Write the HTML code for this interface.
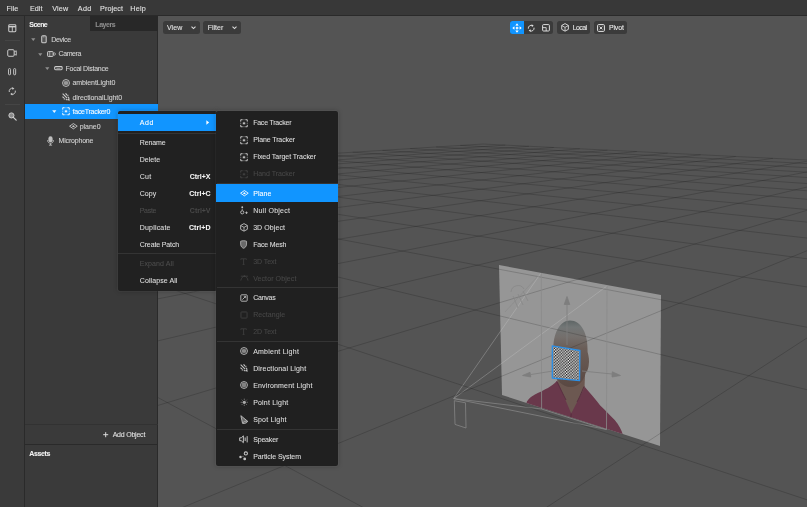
<!DOCTYPE html>
<html lang="en">
<head>
<meta charset="utf-8">
<title>Scene Editor</title>
<style>
*{margin:0;padding:0;box-sizing:border-box}
html,body{width:807px;height:507px;overflow:hidden;background:#545454}
body{position:relative;font-family:"Liberation Sans",sans-serif;font-size:7px;line-height:10px;color:#d0d0d0;-webkit-font-smoothing:antialiased}
.abs{position:absolute;display:block}
.t{white-space:nowrap;font-size:7px;line-height:10px;height:10px;-webkit-text-stroke:0.08px currentColor}
.b{-webkit-text-stroke:0.05px currentColor}
.b{font-weight:bold}
svg{display:block;overflow:visible}
#menubar{left:0;top:0;width:807px;height:16.3px;background:#383838;border-bottom:1.5px solid #2a2a2a}
#ltool{left:0;top:16px;width:25px;height:491px;background:#3a3a3a;border-right:1px solid #2a2a2a}
#scene{left:25px;top:16px;width:133px;height:428px;background:#3a3a3a}
#assets{left:25px;top:444px;width:133px;height:63px;background:#3a3a3a;border-top:1px solid #2a2a2a}
#vpborder{left:157px;top:16px;width:1px;height:491px;background:#2a2a2a}
#layers{left:90px;top:16px;width:68px;height:15px;background:#282828}
.selrow{background:#1195ff}
.sep{height:1px;background:#343434}
.menu{background:#212121;border-radius:2px;box-shadow:0 0 0 0.6px rgba(255,255,255,.07),0 0 5px rgba(0,0,0,.28)}
.hlrow{background:#1195ff}
.btn{background:#3b3b3b;border-radius:2.5px}
#vp{left:158px;top:16px;width:649px;height:491px;overflow:hidden}
</style>
</head>
<body>
<div id="app" style="position:absolute;left:0;top:0;width:807px;height:507px;overflow:hidden;transform:translateZ(0);will-change:transform">
<!-- viewport -->
<div id="vp" class="abs">
<svg width="649" height="491" viewBox="158 16 649 491">
  <defs>
    <pattern id="chk" patternUnits="userSpaceOnUse" width="2.8" height="2.8" patternTransform="matrix(1 0.17 -0.01 1.02 552.3 345.8)">
      <rect width="2.8" height="2.8" fill="#f6f6f6"/>
      <rect width="1.4" height="1.4" fill="#161616"/>
      <rect x="1.4" y="1.4" width="1.4" height="1.4" fill="#161616"/>
    </pattern>
    <linearGradient id="headg" x1="0" y1="0" x2="0" y2="1"><stop offset="0" stop-color="#5e6565"/><stop offset="0.1" stop-color="#727676"/><stop offset="0.25" stop-color="#746f6c"/><stop offset="0.42" stop-color="#6a5d57"/><stop offset="1" stop-color="#5a4842"/></linearGradient>
    <clipPath id="planeclip"><path d="M499 265L661 295L660 446L502 395Z"/></clipPath>
  </defs>
  <!-- device + frustum -->
  <g fill="none" stroke="#888" stroke-width="0.75">
    <path d="M454.3 400.7L465.5 402.8L466 428L455 424.4Z"/>
    <path d="M453.7 398.6L541 273M453.7 398.6L607 286M453.7 398.6L606.5 429.5M453.7 398.6L541.6 409"/>
  </g>
  <!-- image plane -->
  <path d="M499 265L661 295L660 446L502 395Z" fill="#c6c6c6" fill-opacity="0.58"/>
  <g clip-path="url(#planeclip)">
    <!-- person -->
    <path d="M526.9 401.4C531 396 536 394 539 392.6C545 389.5 551 387 556.7 381.3L584 386C590 393 596 400 600.2 405.4C606 411 611 416 614.7 420C619 425 621.5 430 622.8 434.4L623 442L526 405Z" fill="#69384b"/>
    <path d="M557 380L571.2 413.5L584.5 387.7L585 374L556 370Z" fill="#6c5851"/>
    <path d="M553.4 352C552.6 333 560 320.5 570 320.5C581 320.5 588.2 333 587.6 352C588.6 356 589.6 360 588.6 366C587.6 371 586.6 372 585.6 373C584 381 578 387 570.5 387C562 387 556 380 554.6 371C553.6 364 553.6 358 553.4 352Z" fill="url(#headg)"/>
    <path d="M571.2 413.5L570 432" stroke="#552b3b" stroke-width="0.9" fill="none"/>
    <path d="M556.7 381.3L562 392L566 400M584 386.5L580 396L577 402" stroke="#5a3041" stroke-width="1" fill="none"/>
  </g>
  <path id="grid" d="M483.0 144.0L1500.0 194.3M460.3 145.4L1500.0 199.9M436.1 147.0L1500.0 206.3M410.2 148.6L1500.0 213.5M382.5 150.4L1500.0 221.8M352.6 152.2L1500.0 231.4M320.4 154.3L1500.0 242.7M285.5 156.5L1500.0 256.1M247.7 158.9L1500.0 272.2M206.5 161.5L1500.0 292.1M161.4 164.3L1500.0 317.2M111.9 167.4L1500.0 349.9M57.4 170.9L1500.0 394.2M-3.1 174.7L1500.0 457.7M-70.5 178.9L1500.0 556.2M-146.1 183.7L1500.0 729.6M-231.5 189.1L1500.0 1116.0M-328.8 195.2L1500.0 2733.1M483.0 144.0L-700.0 218.7M505.3 145.1L-700.0 225.7M528.9 146.3L-700.0 233.7M553.7 147.5L-700.0 242.8M579.8 148.8L-700.0 253.1M607.5 150.2L-700.0 265.1M636.7 151.6L-700.0 279.2M667.7 153.1L-700.0 295.8M700.6 154.8L-700.0 315.9M735.6 156.5L-700.0 340.7M773.0 158.3L-700.0 371.8M812.8 160.3L-700.0 412.1M855.5 162.4L-700.0 466.6M901.3 164.7L-700.0 544.2M950.6 167.1L-700.0 663.4M1003.8 169.8L-700.0 870.3M1061.3 172.6L-700.0 1317.9M1123.8 175.7L-700.0 3008.2" fill="none" stroke="#000" stroke-opacity="0.17" stroke-width="1"/>
  <!-- frame lines on plane -->
  <g fill="none" stroke="#8a8a8a" stroke-width="0.8">
    <path d="M541.3 273L541.6 409L606.5 429.5L607 285.5"/>
  </g>
  <!-- light gizmo -->
  <g fill="none" stroke="#888" stroke-width="0.8">
    <path d="M511 292a7 7 0 0 1 13 -3M513 296l5 12M518 294l5 11M523 291l5 10"/>
    <path d="M505 312L538 276" stroke-opacity="0.7"/>
  </g>
  <!-- arrows -->
  <g fill="#7e7e7e" stroke="#7e7e7e" stroke-width="0.8">
    <path d="M567 303V345" fill="none"/>
    <path d="M567 296.5L569.8 304.5H564.2Z"/>
    <path d="M531 374.5L553 371" fill="none"/>
    <path d="M522.5 375.5L530 372.3L530.8 377Z"/>
    <path d="M582 371L612 374" fill="none"/>
    <path d="M620.5 375.5L612.3 371.8L612 377Z"/>
  </g>
  <!-- checker plane -->
  <path d="M552.3 345.8L579.9 350.5L579.6 380.6L552.3 378Z" fill="url(#chk)" stroke="#2c8fe6" stroke-width="1.3" stroke-linejoin="round"/>
</svg>
</div>

<!-- viewport buttons -->
<div class="abs btn" style="left:163px;top:21px;width:37px;height:13px"></div>
<span class="abs t" style="left:166.95px;top:23px;color:#e6e6e6;letter-spacing:0.118px;">View</span>
<svg class="abs" style="left:191.3px;top:26.2px" width="5" height="3.4" viewBox="0 0 6 4"><path d="M0.6 0.6L3 3L5.4 0.6" fill="none" stroke="#dcdcdc" stroke-width="1.3"/></svg>
<div class="abs btn" style="left:203.3px;top:21px;width:37.4px;height:13px"></div>
<span class="abs t" style="left:207.65px;top:23px;color:#e6e6e6;letter-spacing:0.027px;">Filter</span>
<svg class="abs" style="left:232px;top:26.2px" width="5" height="3.4" viewBox="0 0 6 4"><path d="M0.6 0.6L3 3L5.4 0.6" fill="none" stroke="#dcdcdc" stroke-width="1.3"/></svg>

<!-- transform toolbar -->
<div class="abs btn" style="left:509.5px;top:21.2px;width:43.5px;height:13px"></div>
<div class="abs" style="left:509.5px;top:21.2px;width:14.5px;height:13px;background:#1195ff;border-radius:2.5px 0 0 2.5px"></div>
<svg class="abs" style="left:511.7px;top:22.7px" width="10" height="10" viewBox="0 0 10 10"><path d="M5 0.3L6.7 2.4H3.3ZM5 9.7L3.3 7.6H6.7ZM0.3 5L2.4 3.3V6.7ZM9.7 5L7.6 6.7V3.3Z" fill="#fff"/><rect x="4.1" y="4.1" width="1.8" height="1.8" fill="#fff"/><path d="M5 2.4V7.6M2.4 5H7.6" stroke="#fff" stroke-width="0.7" stroke-dasharray="1 0.9"/></svg>
<svg class="abs" style="left:527.4px;top:23.5px" width="8.4" height="8.4" viewBox="0 0 10 10"><path d="M1.6 5.6A3.5 3.5 0 0 1 6.6 1.9M8.4 4.4A3.5 3.5 0 0 1 3.4 8.1" fill="none" stroke="#e6e6e6" stroke-width="1.1"/><path d="M5.6 0.4L8 2.2L5.8 3.6Z" fill="#e6e6e6"/><path d="M4.4 9.6L2 7.8L4.2 6.4Z" fill="#e6e6e6"/></svg>
<svg class="abs" style="left:542px;top:23.8px" width="8" height="7.6" viewBox="0 0 9 9" preserveAspectRatio="none"><rect x="0.7" y="0.7" width="7.6" height="7.6" rx="1" fill="none" stroke="#e6e6e6" stroke-width="1.1"/><path d="M0.7 4.3H4.7V8.3" fill="none" stroke="#e6e6e6" stroke-width="1"/></svg>
<div class="abs btn" style="left:556.8px;top:21.2px;width:33.5px;height:13px"></div>
<svg class="abs" style="left:560.5px;top:23.4px" width="8.1" height="8.8" viewBox="0 0 9 10"><path d="M4.5 0.7L8.3 2.8V7.2L4.5 9.3L0.7 7.2V2.8Z" fill="none" stroke="#e6e6e6" stroke-width="1" stroke-linejoin="round"/><path d="M0.8 2.9L4.5 5L8.2 2.9M4.5 5V9.2" fill="none" stroke="#e6e6e6" stroke-width="0.9"/></svg>
<span class="abs t" style="left:572.65px;top:23px;color:#ececec;letter-spacing:-0.584px;">Local</span>
<div class="abs btn" style="left:593.5px;top:21.2px;width:33.5px;height:13px"></div>
<svg class="abs" style="left:597.1px;top:23.8px" width="8" height="8" viewBox="0 0 8 8"><rect x="0.6" y="0.6" width="6.8" height="6.8" rx="1" fill="none" stroke="#e6e6e6" stroke-width="1"/><path d="M2.6 2.6L5.4 5.4M5.4 2.6L2.6 5.4" stroke="#e6e6e6" stroke-width="0.9"/></svg>
<span class="abs t" style="left:608.95px;top:23px;color:#ececec;letter-spacing:-0.166px;">Pivot</span>

<!-- menubar -->
<div id="menubar" class="abs"></div>
<span class="abs t" style="left:6.55px;top:4px;color:#e4e4e4;font-size:7.2px;letter-spacing:0.069px;">File</span><span class="abs t" style="left:29.95px;top:4px;color:#e4e4e4;font-size:7.2px;letter-spacing:0.070px;">Edit</span><span class="abs t" style="left:52.25px;top:4px;color:#e4e4e4;font-size:7.2px;letter-spacing:0.149px;">View</span><span class="abs t" style="left:77.65px;top:4px;color:#e4e4e4;font-size:7.2px;letter-spacing:0.452px;">Add</span><span class="abs t" style="left:100.05px;top:4px;color:#e4e4e4;font-size:7.2px;letter-spacing:0.104px;">Project</span><span class="abs t" style="left:130.35px;top:4px;color:#e4e4e4;font-size:7.2px;letter-spacing:0.234px;">Help</span>

<!-- left tool column -->
<div id="ltool" class="abs"></div>
<svg class="abs" style="left:7.6px;top:24.2px" width="8.6" height="8.4" viewBox="0 0 9 9"><rect x="0.7" y="0.7" width="7.6" height="7.6" rx="1" fill="none" stroke="#cecece" stroke-width="1.1"/><path d="M0.7 2.9H8.3" stroke="#cecece" stroke-width="1.5" fill="none"/><path d="M4.5 3.1V8.3" stroke="#cecece" stroke-width="1" fill="none"/></svg>
<div class="abs" style="left:5px;top:40.3px;width:14.5px;height:1px;background:#454545"></div>
<svg class="abs" style="left:7.1px;top:49.2px" width="10" height="8" viewBox="0 0 11 9"><rect x="0.7" y="0.8" width="7.2" height="7.4" rx="1.2" fill="none" stroke="#cecece" stroke-width="1.1"/><path d="M7.9 3.4L10.3 2V7L7.9 5.6" fill="none" stroke="#cecece" stroke-width="1" stroke-linejoin="round"/></svg>
<svg class="abs" style="left:7.9px;top:68.4px" width="8.2" height="7.4" viewBox="0 0 9 8"><rect x="0.6" y="0.6" width="2.2" height="6.8" rx="0.9" fill="none" stroke="#cecece" stroke-width="1"/><rect x="6.2" y="0.6" width="2.2" height="6.8" rx="0.9" fill="none" stroke="#cecece" stroke-width="1"/></svg>
<svg class="abs" style="left:7.8px;top:87.2px" width="8.6" height="8.6" viewBox="0 0 10 10"><path d="M1.5 5.8A3.6 3.6 0 0 1 5.9 1.5M8.5 4.2A3.6 3.6 0 0 1 4.1 8.5" fill="none" stroke="#cecece" stroke-width="1.1"/><path d="M5 0.1L7.4 1.9L5.1 3.3Z" fill="#cecece"/><path d="M5 9.9L2.6 8.1L4.9 6.7Z" fill="#cecece"/></svg>
<div class="abs" style="left:5px;top:104px;width:14.5px;height:1px;background:#454545"></div>
<svg class="abs" style="left:7.6px;top:111.6px" width="8.8" height="8.8" viewBox="0 0 10 10"><circle cx="3.9" cy="3.9" r="2.9" fill="#8a8a8a" stroke="#cecece" stroke-width="1.1"/><path d="M6.1 6.1L9.3 9.3" stroke="#cecece" stroke-width="1.4" stroke-linecap="round"/></svg>

<!-- scene panel -->
<div id="scene" class="abs"></div>
<div id="assets" class="abs"></div>
<div id="vpborder" class="abs"></div>
<div id="layers" class="abs"></div>
<span class="abs t b" style="left:29.35px;top:20px;color:#f4f4f4;letter-spacing:-0.556px;">Scene</span>
<span class="abs t b" style="left:95.35px;top:20px;color:#8e8e8e;letter-spacing:-0.476px;">Layers</span>
<span class="abs" style="left:31.1px;top:38.1px;color:#8f8f8f"><svg class="ar" width="4.6" height="3" viewBox="0 0 6 4"><path d="M0.2 0.3H5.8L3 3.9Z" fill="currentColor"/></svg></span><span class="abs " style="left:41.04px;top:35.16px;color:#cdcdcd;"><svg class="ic" width="5.92" height="8.48" viewBox="0 0 7.4 10.6" ><rect x="0.9" y="0.9" width="5.6" height="8.8" rx="1.4" fill="#888" fill-opacity="0.35" stroke="currentColor" stroke-width="1.3"/><path d="M2.6 2.4H4.4" stroke="currentColor" stroke-width="0.8"/></svg></span><span class="abs t" style="left:51.15px;top:35px;color:#d4d4d4;letter-spacing:-0.281px;">Device</span><span class="abs" style="left:38.1px;top:52.5px;color:#8f8f8f"><svg class="ar" width="4.6" height="3" viewBox="0 0 6 4"><path d="M0.2 0.3H5.8L3 3.9Z" fill="currentColor"/></svg></span><span class="abs " style="left:47.20px;top:50.84px;color:#cdcdcd;"><svg class="ic" width="8.80" height="6.00" viewBox="0 0 11 7.5" ><rect x="0.7" y="0.7" width="7" height="6.1" rx="0.9" fill="#777" fill-opacity="0.35" stroke="currentColor" stroke-width="1.2"/><path d="M3.4 1V6.5" stroke="currentColor" stroke-width="0.8"/><rect x="8.3" y="2.3" width="2.1" height="2.9" rx="0.8" fill="none" stroke="currentColor" stroke-width="0.9"/></svg></span><span class="abs t" style="left:58.55px;top:49px;color:#d4d4d4;letter-spacing:-0.421px;">Camera</span><span class="abs" style="left:45.3px;top:67.0px;color:#8f8f8f"><svg class="ar" width="4.6" height="3" viewBox="0 0 6 4"><path d="M0.2 0.3H5.8L3 3.9Z" fill="currentColor"/></svg></span><span class="abs " style="left:54.30px;top:66.04px;color:#cdcdcd;"><svg class="ic" width="8.80" height="4.48" viewBox="0 0 11 5.6" ><rect x="0.8" y="0.8" width="9.4" height="3.8" rx="1.2" fill="none" stroke="currentColor" stroke-width="1.3"/><path d="M3 3.2h5" stroke="currentColor" stroke-width="0.7"/></svg></span><span class="abs t" style="left:65.45px;top:64px;color:#d4d4d4;letter-spacing:-0.238px;">Focal Distance</span><span class="abs " style="left:62.00px;top:78.72px;color:#cdcdcd;"><svg class="ic" width="8.00" height="8.00" viewBox="0 0 10 10" ><circle cx="5" cy="5" r="4.3" fill="none" stroke="currentColor" stroke-width="1.1"/><circle cx="5" cy="5" r="2.9" fill="currentColor" fill-opacity="0.5"/><path d="M2.2 5H7.8" stroke="currentColor" stroke-width="0.7" stroke-opacity="0.8"/><path d="M2.6 3.6H7.4M2.6 6.4H7.4" stroke="currentColor" stroke-width="0.5" stroke-opacity="0.5"/></svg></span><span class="abs t" style="left:72.55px;top:78px;color:#d4d4d4;letter-spacing:-0.099px;">ambientLight0</span><span class="abs " style="left:62.10px;top:93.16px;color:#cdcdcd;"><svg class="ic" width="8.00" height="8.00" viewBox="0 0 10 10" ><path d="M0.8 0.8L6.4 6.4M4.4 0.6L6.3 2.5M0.6 4.4L2.5 6.3M7.6 5.2L9 6.6M5.2 7.6L6.6 9" stroke="currentColor" stroke-width="1.35" fill="none"/><path d="M9.7 9.7L6.3 8.9L8.9 6.3Z" fill="currentColor"/><path d="M8.3 4.3L5.9 3.7L7.7 1.9Z" fill="currentColor" fill-opacity="0.9"/><path d="M4.3 8.3L1.9 7.7L3.7 5.9Z" fill="currentColor" fill-opacity="0.9"/></svg></span><span class="abs t" style="left:72.55px;top:93px;color:#d4d4d4;letter-spacing:-0.093px;">directionalLight0</span><div class="abs selrow" style="left:25px;top:104px;width:133px;height:15px"></div><span class="abs" style="left:52.0px;top:110.3px;color:#e8f4ff"><svg class="ar" width="4.6" height="3" viewBox="0 0 6 4"><path d="M0.2 0.3H5.8L3 3.9Z" fill="currentColor"/></svg></span><span class="abs " style="left:62.00px;top:107.36px;color:#eaf5ff;"><svg class="ic" width="8.00" height="8.48" viewBox="0 0 10 10.6" ><path d="M0.9 3.3V0.9H3.3M6.7 0.9H9.1V3.3M9.1 7.3V9.7H6.7M3.3 9.7H0.9V7.3" fill="none" stroke="currentColor" stroke-width="1.25"/><path d="M4.3 0.9H5.7M4.3 9.7H5.7M0.9 4.6V6M9.1 4.6V6" stroke="currentColor" stroke-width="1.1" stroke-opacity="0.75"/><circle cx="5" cy="5.3" r="1.3" fill="currentColor"/><circle cx="5" cy="5.3" r="2.3" fill="currentColor" fill-opacity="0.25"/></svg></span><span class="abs t" style="left:72.55px;top:107px;color:#ffffff;letter-spacing:-0.254px;">faceTracker0</span><span class="abs " style="left:68.50px;top:123.20px;color:#cdcdcd;"><svg class="ic" width="8.80" height="6.40" viewBox="0 0 11 8" ><path d="M5.5 0.7L10.3 4L5.5 7.3L0.7 4Z" fill="none" stroke="currentColor" stroke-width="1.1" stroke-linejoin="round"/><path d="M5.5 2.7L7.4 4L5.5 5.3L3.6 4Z" fill="currentColor"/></svg></span><span class="abs t" style="left:79.75px;top:122px;color:#d4d4d4;letter-spacing:-0.046px;">plane0</span><span class="abs " style="left:47.48px;top:135.64px;color:#cdcdcd;"><svg class="ic" width="7.04" height="9.68" viewBox="0 0 8 11" ><rect x="1.6" y="0.3" width="4.8" height="6.8" rx="2.4" fill="currentColor" fill-opacity="0.9"/><path d="M0.6 4.8C0.6 9.3 7.4 9.3 7.4 4.8M4 8.4V10.3M2.2 10.4H5.8" fill="none" stroke="currentColor" stroke-width="0.9"/></svg></span><span class="abs t" style="left:58.55px;top:136px;color:#d4d4d4;letter-spacing:-0.186px;">Microphone</span>
<div class="abs" style="left:25px;top:424px;width:133px;height:1px;background:#323232"></div>
<svg class="abs" style="left:103.1px;top:431.9px" width="5.4" height="5.4" viewBox="0 0 6 6"><path d="M3 0.2V5.8M0.2 3H5.8" stroke="#dedede" stroke-width="1.1"/></svg>
<span class="abs t" style="left:112.65px;top:430px;color:#e0e0e0;letter-spacing:-0.216px;">Add Object</span>
<span class="abs t b" style="left:29.35px;top:449px;color:#f4f4f4;letter-spacing:-0.394px;">Assets</span>

<!-- context menu 1 -->
<div class="abs menu" style="left:117.5px;top:111px;width:99px;height:180px"></div>
<div class="abs hlrow" style="left:117.5px;top:113.8px;width:99px;height:17.4px"></div>
<svg class="abs" style="left:205.8px;top:120.4px" width="3.4" height="5" viewBox="0 0 4 6"><path d="M0.4 0.4L3.7 3L0.4 5.6Z" fill="#fff"/></svg>
<div class="abs sep" style="left:117.5px;top:132.6px;width:99px"></div>
<div class="abs sep" style="left:117.5px;top:253px;width:99px"></div>
<span class="abs t" style="left:139.75px;top:118px;color:#fff;letter-spacing:0.566px;">Add</span><span class="abs t" style="left:139.75px;top:138px;color:#dedede;letter-spacing:-0.114px;">Rename</span><span class="abs t" style="left:139.75px;top:155px;color:#dedede;letter-spacing:0.013px;">Delete</span><span class="abs t" style="left:139.75px;top:172px;color:#dedede;letter-spacing:0.297px;">Cut</span><span class="abs t b" style="left:189.65px;top:172px;color:#f4f4f4;letter-spacing:0.017px;">Ctrl+X</span><span class="abs t" style="left:139.75px;top:189px;color:#dedede;letter-spacing:0.019px;">Copy</span><span class="abs t b" style="left:189.25px;top:189px;color:#f4f4f4;letter-spacing:0.019px;">Ctrl+C</span><span class="abs t" style="left:139.75px;top:206px;color:#4d4d4d;letter-spacing:-0.302px;">Paste</span><span class="abs t b" style="left:189.85px;top:206px;color:#484848;letter-spacing:-0.023px;">Ctrl+V</span><span class="abs t" style="left:139.75px;top:223px;color:#dedede;letter-spacing:0.189px;">Duplicate</span><span class="abs t b" style="left:188.95px;top:223px;color:#f4f4f4;letter-spacing:0.079px;">Ctrl+D</span><span class="abs t" style="left:139.75px;top:240px;color:#dedede;letter-spacing:-0.133px;">Create Patch</span><span class="abs t" style="left:139.75px;top:259px;color:#4d4d4d;letter-spacing:0.101px;">Expand All</span><span class="abs t" style="left:139.75px;top:276px;color:#dedede;letter-spacing:0.093px;">Collapse All</span>

<!-- context menu 2 -->
<div class="abs menu" style="left:216.4px;top:110.9px;width:121.4px;height:355.3px;background:#202020"></div>
<div class="abs hlrow" style="left:216.4px;top:184.3px;width:121.4px;height:17.4px"></div>
<span class="abs " style="left:239.90px;top:118.56px;color:#c4c4c4;"><svg class="ic" width="8.00" height="8.48" viewBox="0 0 10 10.6" ><path d="M0.9 3.3V0.9H3.3M6.7 0.9H9.1V3.3M9.1 7.3V9.7H6.7M3.3 9.7H0.9V7.3" fill="none" stroke="currentColor" stroke-width="1.25"/><path d="M4.3 0.9H5.7M4.3 9.7H5.7M0.9 4.6V6M9.1 4.6V6" stroke="currentColor" stroke-width="1.1" stroke-opacity="0.75"/><circle cx="5" cy="5.3" r="1.3" fill="currentColor"/><circle cx="5" cy="5.3" r="2.3" fill="currentColor" fill-opacity="0.25"/></svg></span><span class="abs t" style="left:253.15px;top:118px;color:#dedede;letter-spacing:-0.224px;">Face Tracker</span><span class="abs " style="left:239.90px;top:135.56px;color:#c4c4c4;"><svg class="ic" width="8.00" height="8.48" viewBox="0 0 10 10.6" ><path d="M0.9 3.3V0.9H3.3M6.7 0.9H9.1V3.3M9.1 7.3V9.7H6.7M3.3 9.7H0.9V7.3" fill="none" stroke="currentColor" stroke-width="1.25"/><path d="M4.3 0.9H5.7M4.3 9.7H5.7M0.9 4.6V6M9.1 4.6V6" stroke="currentColor" stroke-width="1.1" stroke-opacity="0.75"/><circle cx="5" cy="5.3" r="1.3" fill="currentColor"/><circle cx="5" cy="5.3" r="2.3" fill="currentColor" fill-opacity="0.25"/></svg></span><span class="abs t" style="left:253.15px;top:135px;color:#dedede;letter-spacing:-0.107px;">Plane Tracker</span><span class="abs " style="left:239.90px;top:152.56px;color:#c4c4c4;"><svg class="ic" width="8.00" height="8.48" viewBox="0 0 10 10.6" ><path d="M0.9 3.3V0.9H3.3M6.7 0.9H9.1V3.3M9.1 7.3V9.7H6.7M3.3 9.7H0.9V7.3" fill="none" stroke="currentColor" stroke-width="1.25"/><path d="M4.3 0.9H5.7M4.3 9.7H5.7M0.9 4.6V6M9.1 4.6V6" stroke="currentColor" stroke-width="1.1" stroke-opacity="0.75"/><circle cx="5" cy="5.3" r="1.3" fill="currentColor"/><circle cx="5" cy="5.3" r="2.3" fill="currentColor" fill-opacity="0.25"/></svg></span><span class="abs t" style="left:253.15px;top:152px;color:#dedede;letter-spacing:-0.041px;">Fixed Target Tracker</span><span class="abs " style="left:239.90px;top:169.56px;color:#414141;"><svg class="ic" width="8.00" height="8.48" viewBox="0 0 10 10.6" ><path d="M0.9 3.3V0.9H3.3M6.7 0.9H9.1V3.3M9.1 7.3V9.7H6.7M3.3 9.7H0.9V7.3" fill="none" stroke="currentColor" stroke-width="1.25"/><path d="M4.3 0.9H5.7M4.3 9.7H5.7M0.9 4.6V6M9.1 4.6V6" stroke="currentColor" stroke-width="1.1" stroke-opacity="0.75"/><circle cx="5" cy="5.3" r="1.3" fill="currentColor"/><circle cx="5" cy="5.3" r="2.3" fill="currentColor" fill-opacity="0.25"/></svg></span><span class="abs t" style="left:253.15px;top:169px;color:#474747;letter-spacing:-0.012px;">Hand Tracker</span><span class="abs " style="left:239.50px;top:190.00px;color:#fff;"><svg class="ic" width="8.80" height="6.40" viewBox="0 0 11 8" ><path d="M5.5 0.7L10.3 4L5.5 7.3L0.7 4Z" fill="none" stroke="currentColor" stroke-width="1.1" stroke-linejoin="round"/><path d="M5.5 2.7L7.4 4L5.5 5.3L3.6 4Z" fill="currentColor"/></svg></span><span class="abs t" style="left:253.15px;top:189px;color:#fff;letter-spacing:0.073px;">Plane</span><span class="abs " style="left:239.90px;top:205.80px;color:#c4c4c4;"><svg class="ic" width="8.00" height="8.80" viewBox="0 0 10 11" ><circle cx="2.8" cy="1.5" r="1.15" fill="currentColor"/><circle cx="2.8" cy="7.9" r="2" fill="none" stroke="currentColor" stroke-width="1.1"/><path d="M2.8 3.2v2.4" stroke="currentColor" stroke-width="0.9"/><path d="M6.6 8.4h3M8.1 6.9v3" stroke="currentColor" stroke-width="1.1"/></svg></span><span class="abs t" style="left:253.15px;top:206px;color:#dedede;letter-spacing:0.257px;">Null Object</span><span class="abs " style="left:239.90px;top:222.80px;color:#c4c4c4;"><svg class="ic" width="8.00" height="8.80" viewBox="0 0 10 11" ><path d="M5 0.8L9.2 3.1V7.9L5 10.2L0.8 7.9V3.1Z" fill="none" stroke="currentColor" stroke-width="1.1" stroke-linejoin="round"/><path d="M0.9 3.2L5 5.5L9.1 3.2M5 5.5V10" fill="none" stroke="currentColor" stroke-width="1"/></svg></span><span class="abs t" style="left:253.15px;top:223px;color:#dedede;letter-spacing:0.084px;">3D Object</span><span class="abs " style="left:240.30px;top:239.80px;color:#c4c4c4;"><svg class="ic" width="7.20" height="8.80" viewBox="0 0 9 11" ><path d="M0.8 1.6C2.5 0.6 6.5 0.6 8.2 1.6V5.2C8.2 7.8 6.6 9.6 4.5 10.4C2.4 9.6 0.8 7.8 0.8 5.2Z" fill="currentColor" fill-opacity="0.45" stroke="currentColor" stroke-width="0.9"/></svg></span><span class="abs t" style="left:253.15px;top:240px;color:#dedede;letter-spacing:-0.178px;">Face Mesh</span><span class="abs " style="left:240.30px;top:257.60px;color:#414141;"><svg class="ic" width="7.20" height="7.20" viewBox="0 0 9 9" ><path d="M1 2.2V1H8V2.2M4.5 1V8M3.3 8H5.7" fill="none" stroke="currentColor" stroke-width="1"/></svg></span><span class="abs t" style="left:253.15px;top:257px;color:#474747;letter-spacing:-0.068px;">3D Text</span><span class="abs " style="left:239.50px;top:275.00px;color:#414141;"><svg class="ic" width="8.80" height="6.40" viewBox="0 0 11 8" ><path d="M1 1.5H10M1 7C1.5 3.5 3.5 1.8 5.5 1.5C7.5 1.8 9.5 3.5 10 7" fill="none" stroke="currentColor" stroke-width="1"/><rect x="4.6" y="0.6" width="1.8" height="1.8" fill="currentColor"/></svg></span><span class="abs t" style="left:253.15px;top:274px;color:#474747;letter-spacing:0.097px;">Vector Object</span><span class="abs " style="left:239.90px;top:293.70px;color:#c4c4c4;"><svg class="ic" width="8.00" height="8.00" viewBox="0 0 10 10" ><rect x="1" y="1" width="8" height="8" rx="1" fill="none" stroke="currentColor" stroke-width="1.1"/><path d="M3 7L7 3" stroke="currentColor" stroke-width="1.1"/><path d="M4.8 3H7V5.2" fill="none" stroke="currentColor" stroke-width="0.9"/></svg></span><span class="abs t" style="left:253.15px;top:293px;color:#dedede;letter-spacing:-0.227px;">Canvas</span><span class="abs " style="left:239.90px;top:310.70px;color:#414141;"><svg class="ic" width="8.00" height="8.00" viewBox="0 0 10 10" ><rect x="1.2" y="1.2" width="7.6" height="7.6" rx="0.8" fill="none" stroke="currentColor" stroke-width="1.1"/></svg></span><span class="abs t" style="left:253.15px;top:310px;color:#474747;letter-spacing:0.059px;">Rectangle</span><span class="abs " style="left:240.30px;top:328.10px;color:#414141;"><svg class="ic" width="7.20" height="7.20" viewBox="0 0 9 9" ><path d="M1 2.2V1H8V2.2M4.5 1V8M3.3 8H5.7" fill="none" stroke="currentColor" stroke-width="1"/></svg></span><span class="abs t" style="left:253.15px;top:327px;color:#474747;letter-spacing:-0.068px;">2D Text</span><span class="abs " style="left:239.90px;top:347.40px;color:#c4c4c4;"><svg class="ic" width="8.00" height="8.00" viewBox="0 0 10 10" ><circle cx="5" cy="5" r="4.3" fill="none" stroke="currentColor" stroke-width="1.1"/><circle cx="5" cy="5" r="2.9" fill="currentColor" fill-opacity="0.5"/><path d="M2.2 5H7.8" stroke="currentColor" stroke-width="0.7" stroke-opacity="0.8"/><path d="M2.6 3.6H7.4M2.6 6.4H7.4" stroke="currentColor" stroke-width="0.5" stroke-opacity="0.5"/></svg></span><span class="abs t" style="left:253.15px;top:347px;color:#dedede;letter-spacing:0.241px;">Ambient Light</span><span class="abs " style="left:239.90px;top:364.40px;color:#c4c4c4;"><svg class="ic" width="8.00" height="8.00" viewBox="0 0 10 10" ><path d="M0.8 0.8L6.4 6.4M4.4 0.6L6.3 2.5M0.6 4.4L2.5 6.3M7.6 5.2L9 6.6M5.2 7.6L6.6 9" stroke="currentColor" stroke-width="1.35" fill="none"/><path d="M9.7 9.7L6.3 8.9L8.9 6.3Z" fill="currentColor"/><path d="M8.3 4.3L5.9 3.7L7.7 1.9Z" fill="currentColor" fill-opacity="0.9"/><path d="M4.3 8.3L1.9 7.7L3.7 5.9Z" fill="currentColor" fill-opacity="0.9"/></svg></span><span class="abs t" style="left:253.15px;top:364px;color:#dedede;letter-spacing:0.175px;">Directional Light</span><span class="abs " style="left:239.90px;top:381.40px;color:#c4c4c4;"><svg class="ic" width="8.00" height="8.00" viewBox="0 0 10 10" ><circle cx="5" cy="5" r="4.3" fill="none" stroke="currentColor" stroke-width="1.1"/><circle cx="5" cy="5" r="3" fill="currentColor" fill-opacity="0.6"/></svg></span><span class="abs t" style="left:253.15px;top:381px;color:#dedede;letter-spacing:0.174px;">Environment Light</span><span class="abs " style="left:239.61px;top:398.11px;color:#c4c4c4;"><svg class="ic" width="8.58" height="8.58" viewBox="0 0 11 11" ><circle cx="5.5" cy="5.5" r="2.1" fill="currentColor" fill-opacity="0.85"/><path d="M5.5 0.8V2.6M5.5 8.4V10.2M0.8 5.5H2.6M8.4 5.5H10.2M2.2 2.2L3.4 3.4M7.6 7.6L8.8 8.8M8.8 2.2L7.6 3.4M3.4 7.6L2.2 8.8" stroke="currentColor" stroke-opacity="0.6" stroke-width="1"/></svg></span><span class="abs t" style="left:253.15px;top:398px;color:#dedede;letter-spacing:0.201px;">Point Light</span><span class="abs " style="left:239.65px;top:414.72px;color:#c4c4c4;"><svg class="ic" width="8.50" height="9.35" viewBox="0 0 10 11" ><path d="M1 0.8L9 7.4C8.2 9.4 5.6 10.4 3 9.8Z" fill="currentColor" fill-opacity="0.45" stroke="currentColor" stroke-width="1" stroke-linejoin="round"/><path d="M3 9.8C3.6 8 6.4 6.6 9 7.4" fill="none" stroke="currentColor" stroke-width="0.8"/></svg></span><span class="abs t" style="left:253.15px;top:415px;color:#dedede;letter-spacing:0.197px;">Spot Light</span><span class="abs " style="left:239.15px;top:434.82px;color:#c4c4c4;"><svg class="ic" width="9.50" height="8.55" viewBox="0 0 10 9" ><path d="M0.7 3H2.4L4.6 0.9V8.1L2.4 6H0.7Z" fill="none" stroke="currentColor" stroke-width="1.05" stroke-linejoin="round"/><path d="M6.5 2.6V6.4M8.6 1.2V7.8" stroke="currentColor" stroke-width="1.05"/></svg></span><span class="abs t" style="left:253.15px;top:435px;color:#dedede;letter-spacing:-0.163px;">Speaker</span><span class="abs " style="left:239.15px;top:451.25px;color:#c4c4c4;"><svg class="ic" width="9.50" height="9.50" viewBox="0 0 10 10" ><circle cx="1.6" cy="6.2" r="1.3" fill="currentColor"/><circle cx="6" cy="8.4" r="1.45" fill="currentColor"/><circle cx="7.2" cy="2.6" r="1.7" fill="none" stroke="currentColor" stroke-width="1.1"/><circle cx="4.2" cy="5.6" r="0.6" fill="currentColor" fill-opacity="0.7"/></svg></span><span class="abs t" style="left:253.15px;top:452px;color:#dedede;letter-spacing:-0.052px;">Particle System</span><div class="abs sep" style="left:217px;top:182.7px;width:121px"></div><div class="abs sep" style="left:217px;top:286.7px;width:121px"></div><div class="abs sep" style="left:217px;top:340.5px;width:121px"></div><div class="abs sep" style="left:217px;top:428.8px;width:121px"></div>
</div>
</body>
</html>
